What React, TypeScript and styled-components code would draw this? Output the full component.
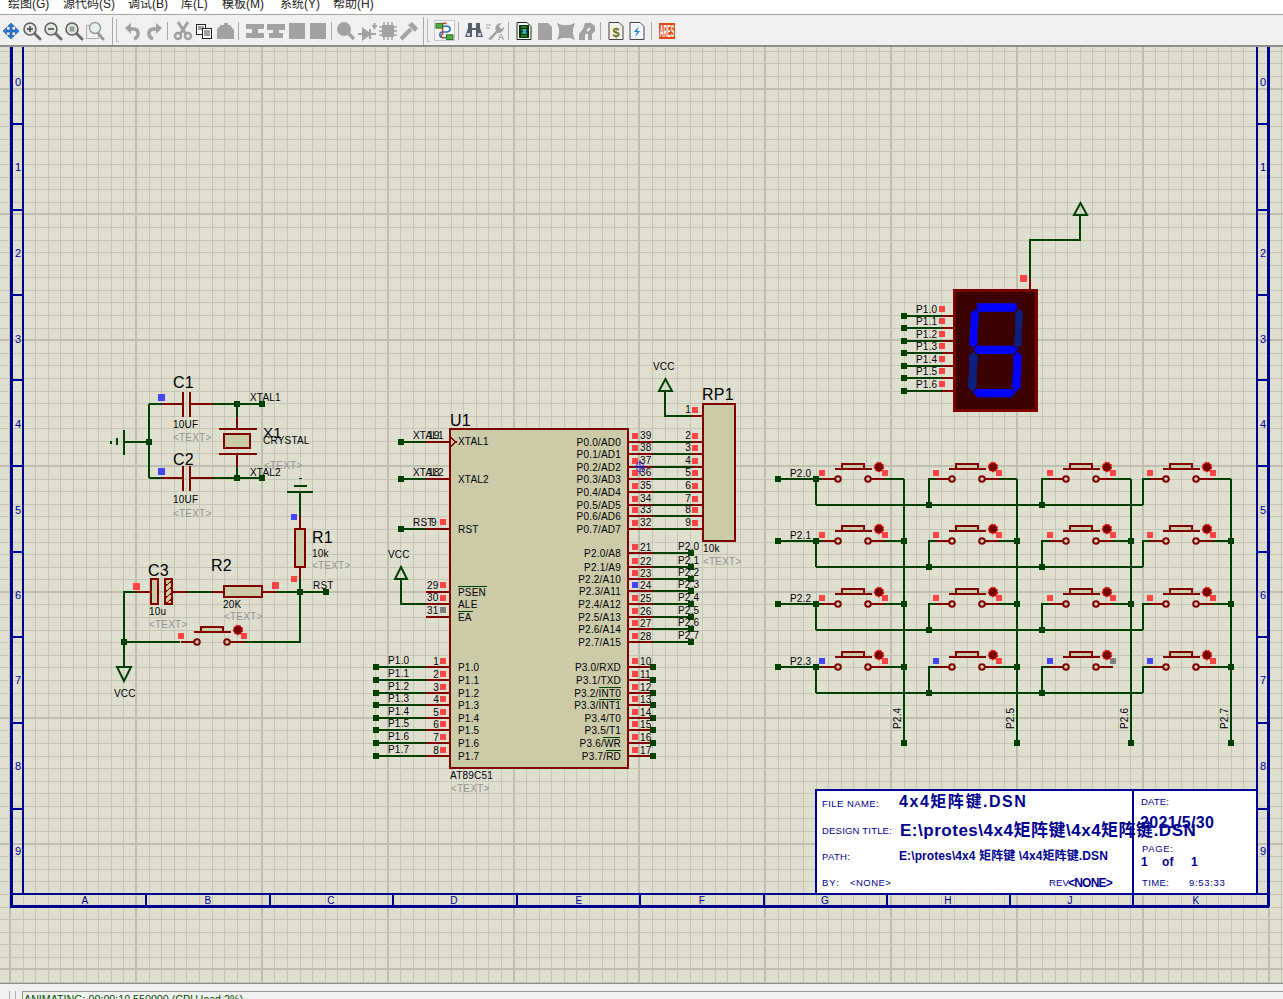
import React from 'react';
import styled, { createGlobalStyle } from 'styled-components';

const WIRE = '#004000';
const LEAD = '#800000';
const SHEET = '#000090';
const BODY = '#cbcbaa';
const GREY = '#a2a2a2';
const FONT = '"Liberation Sans", "Noto Sans CJK SC", sans-serif';

const Global = createGlobalStyle`
  html, body { margin: 0; padding: 0; overflow: hidden; background: #f0f0f0; }
  #root { height: 999px; }
`;

const Shell = styled.div`
  height: 999px;
  width: 1283px;
  display: flex;
  flex-direction: column;
  font-family: ${FONT};
  overflow: hidden;
`;

const MenuBar = styled.nav`
  height: 13px;
  background: #fff;
  display: flex;
  overflow: hidden;
  align-items: flex-end;
  padding-left: 8px;
`;

const MenuItem = styled.span<{ $w: number }>`
  width: ${p => p.$w}px;
  flex: none;
  font-size: 12px;
  line-height: 17px;
  color: #222;
  white-space: nowrap;
`;

const Toolbar = styled.div`
  height: 34px;
  flex: none;
  display: flex;
  align-items: center;
  background: #f0f0f0;
  border-top: 1px solid #f7f7f7;
  border-bottom: 2px solid #8e8e8e;
  box-shadow: inset 0 1px 0 #a9a9a9;
  padding-top: 2px;
  box-sizing: border-box;
`;

const ToolButton = styled.div<{ $active?: boolean }>`
  width: 21px;
  height: 21px;
  flex: none;
  display: flex;
  align-items: center;
  justify-content: center;
  box-sizing: border-box;
  ${p => p.$active && 'border: 1px solid #c8c8c8; background: #f8f8f8;'}
`;

const Sep = styled.div<{ $l: number; $r: number; $tall?: boolean }>`
  width: 1px;
  height: ${p => (p.$tall ? 28 : 18)}px;
  flex: none;
  background: #a8a8a8;
  margin: 0 ${p => p.$r}px 0 ${p => p.$l}px;
`;

const Grip = styled.div<{ $r: number }>`
  width: 2px;
  height: 22px;
  flex: none;
  border-left: 1px solid #b8b8b8;
  border-bottom: 1px solid #b8b8b8;
  margin-right: ${p => p.$r}px;
`;

const Canvas = styled.main`
  flex: 1;
  background: #dfdfd0;
  min-height: 0;
`;

const Sheet = styled.svg`
  display: block;
  font-family: ${FONT};
`;

const StatusBar = styled.footer`
  height: 16px;
  flex: none;
  box-sizing: border-box;
  background: #f0f0f0;
  border-top: 1px solid #8e8e8e;
  overflow: hidden;
  padding-top: 7px;
`;

const StatusRow = styled.div`
  display: flex;
  height: 20px;
  padding-left: 9px;
`;

const StatusGrip = styled.div`
  width: 5px;
  flex: none;
  border-left: 1px solid #b0b0b0;
`;

const StatusPanel = styled.div`
  flex: 1;
  margin-left: 1px;
  border-left: 1px solid #8e8e8e;
  border-top: 1px solid #9a9a9a;
  padding-left: 1px;
  font-size: 10.7px;
  line-height: 14px;
  color: #005000;
  white-space: nowrap;
`;

const GridLine = styled.line<{ $major: boolean }>`
  stroke: ${p => (p.$major ? '#bfbfaf' : '#c6c6b7')};
  stroke-width: ${p => (p.$major ? 2 : 1)};
  shape-rendering: crispEdges;
`;

const WirePath = styled.polyline`
  fill: none;
  stroke: ${WIRE};
  stroke-width: 2;
  shape-rendering: crispEdges;
`;

const LeadPath = styled.polyline<{ $w?: number }>`
  fill: none;
  stroke: ${LEAD};
  stroke-width: ${p => p.$w ?? 2};
  shape-rendering: crispEdges;
`;

const PartBody = styled.rect`
  fill: ${BODY};
  stroke: ${LEAD};
  stroke-width: 2;
  shape-rendering: crispEdges;
`;

const NodeDot = styled.rect`
  fill: ${WIRE};
  shape-rendering: crispEdges;
`;

const Terminal = styled.polygon`
  fill: none;
  stroke: ${WIRE};
  stroke-width: 2;
`;

const MarkRect = styled.rect<{ $tone: string }>`
  fill: ${p => p.$tone};
  shape-rendering: crispEdges;
`;

const Label = styled.text<{ $s?: number; $c?: string; $b?: boolean }>`
  font-size: ${p => p.$s ?? 10}px;
  fill: ${p => p.$c ?? '#000'};
  font-weight: ${p => (p.$b ? 700 : 400)};
  letter-spacing: 0.2px;
`;

const SheetLine = styled.line<{ $w?: number }>`
  stroke: ${SHEET};
  stroke-width: ${p => p.$w ?? 2};
  shape-rendering: crispEdges;
`;

const TitleBox = styled.rect`
  fill: #fff;
  stroke: ${SHEET};
  stroke-width: 2;
  shape-rendering: crispEdges;
`;

const Segment = styled.polygon<{ $on: boolean }>`
  fill: ${p => (p.$on ? '#0000ff' : '#0c2080')};
`;

const DigitCase = styled.rect`
  fill: #3c0000;
  stroke: #7a0000;
  stroke-width: 3;
  shape-rendering: crispEdges;
`;

const Led = styled.circle`
  fill: #700000;
  stroke: #e80000;
  stroke-width: 1.5;
  stroke-dasharray: 2 1;
`;

const PinRing = styled.circle`
  fill: none;
  stroke: ${LEAD};
  stroke-width: 2;
`;

const Probe = styled.g`
  fill: none;
  stroke: #2020d0;
`;

const RED = '#ff4444';
const BLU = '#4444ff';
const GRY = '#808080';

const Wire = ({ p }: { p: string }) => <WirePath points={p} />;
const Lead = ({ p, w }: { p: string; w?: number }) => <LeadPath points={p} $w={w} />;
const Dot = ({ x, y }: { x: number; y: number }) => <NodeDot x={x - 3} y={y - 3} width={6} height={6} />;
const Mark = ({ x, y, t = RED, s = 6 }: { x: number; y: number; t?: string; s?: number }) => (
  <MarkRect x={x - s / 2} y={y - s / 2} width={s} height={s} $tone={t} />
);
const Hidden = ({ x, y }: { x: number; y: number }) => (
  <Label x={x} y={y} $c="#929292">{'<TEXT>'}</Label>
);

// push button with its indicator, x and y are the centre of the left contact
const PushSwitch = ({ x, y, left = RED, right = RED, gap = 30 }: { x: number; y: number; left?: string; right?: string; gap?: number }) => (
  <g>
    <Lead p={`${x - 16},${y} ${x - 3},${y}`} />
    <Lead p={`${x + gap + 3},${y} ${x + gap + 17},${y}`} />
    <PinRing cx={x} cy={y} r={2.8} />
    <PinRing cx={x + gap} cy={y} r={2.8} />
    <Lead p={`${x - 3},${y - 10} ${x + gap + 4},${y - 10}`} />
    <PartBody x={x + 4} y={y - 15} width={gap - 8} height={5} />
    <Led cx={x + gap + 11} cy={y - 12} r={4.4} />
    <Lead p={`${x + gap + 11},${y - 15} ${x + gap + 11},${y - 9}`} w={1} />
    <Mark x={x - 16} y={y - 6} t={left} />
    <Mark x={x + gap + 17} y={y - 6} t={right} />
  </g>
);

const minorX = Array.from({ length: 103 }, (_, i) => i - 11);
const minorY = Array.from({ length: 76 }, (_, i) => i - 4);

const Grid = () => (
  <g>
    {minorX.map(k => {
      const x = Math.round(136 + k * 12.585);
      return <GridLine key={k} x1={x} x2={x} y1={47} y2={983} $major={((k % 10) + 10) % 10 === 0} />;
    })}
    {minorY.map(k => {
      const y = Math.round(88.5 + k * 12.585);
      return <GridLine key={k} x1={0} x2={1283} y1={y} y2={y} $major={((k % 10) + 10) % 10 === 0} />;
    })}
  </g>
);

const ticksY = [124, 210, 295, 380, 466, 552, 637, 723, 809];
const numbersY = [86, 171, 257, 343, 428, 514, 599, 684, 770, 855];
const ticksX = [146, 270, 393, 517, 640, 764, 887, 1010, 1133];
const letters: [string, number][] = [['A', 85], ['B', 208], ['C', 331], ['D', 454], ['E', 579], ['F', 702], ['G', 825], ['H', 948], ['J', 1070], ['K', 1196]];

const Frame = () => (
  <g>
    <SheetLine x1={11} x2={11} y1={47} y2={907} $w={3} />
    <SheetLine x1={23} x2={23} y1={47} y2={895} />
    <SheetLine x1={1257} x2={1257} y1={47} y2={895} />
    <SheetLine x1={1268} x2={1268} y1={47} y2={907} $w={3} />
    <SheetLine x1={11} x2={1268} y1={894} y2={894} />
    <SheetLine x1={10} x2={1269} y1={906} y2={906} $w={3} />
    {ticksY.map(y => (
      <g key={y}>
        <SheetLine x1={11} x2={23} y1={y} y2={y} />
        <SheetLine x1={1257} x2={1268} y1={y} y2={y} />
      </g>
    ))}
    {numbersY.map((y, i) => (
      <g key={y}>
        <Label x={15} y={y} $s={11} $c={SHEET}>{i}</Label>
        <Label x={1260} y={y} $s={11} $c={SHEET}>{i}</Label>
      </g>
    ))}
    {ticksX.map(x => <SheetLine key={x} x1={x} x2={x} y1={894} y2={906} />)}
    {letters.map(([l, x]) => <Label key={l} x={x} y={904} $c={SHEET} textAnchor="middle">{l}</Label>)}
  </g>
);

const TitleBlock = () => (
  <g>
    <TitleBox x={816} y={790} width={441} height={104} />
    <SheetLine x1={1133} x2={1133} y1={790} y2={894} />
    <Label x={822} y={807} $s={9.5} $c={SHEET} textLength={57}>FILE NAME:</Label>
    <Label x={899} y={807} $s={16} $b $c={SHEET} textLength={127}>4x4矩阵键.DSN</Label>
    <Label x={822} y={834} $s={9.5} $c={SHEET} textLength={70}>DESIGN TITLE:</Label>
    <Label x={900} y={836} $s={17} $b $c={SHEET} textLength={296}>E:\protes\4x4矩阵键\4x4矩阵键.DSN</Label>
    <Label x={822} y={860} $s={9.5} $c={SHEET} textLength={28}>PATH:</Label>
    <Label x={899} y={860} $s={12} $b $c={SHEET} textLength={209}>E:\protes\4x4 矩阵键 \4x4矩阵键.DSN</Label>
    <Label x={822} y={886} $s={9.5} $c={SHEET} textLength={17}>BY:</Label>
    <Label x={850} y={886} $s={9.5} $c={SHEET} textLength={41}>{'<NONE>'}</Label>
    <Label x={1049} y={886} $s={9.5} $c={SHEET}>REV</Label>
    <Label x={1068} y={887} $s={12} $b $c={SHEET} textLength={45}>{'<NONE>'}</Label>
    <Label x={1141} y={805} $s={9.5} $c={SHEET} textLength={28}>DATE:</Label>
    <Label x={1140} y={828} $s={16} $b $c={SHEET} textLength={74}>2021/5/30</Label>
    <Label x={1142} y={852} $s={9.5} $c={SHEET} textLength={31}>PAGE:</Label>
    <Label x={1141} y={866} $s={12} $b $c={SHEET}>1</Label>
    <Label x={1162} y={866} $s={12} $b $c={SHEET}>of</Label>
    <Label x={1191} y={866} $s={12} $b $c={SHEET}>1</Label>
    <Label x={1142} y={886} $s={9.5} $c={SHEET} textLength={27}>TIME:</Label>
    <Label x={1189} y={886} $s={9.5} $c={SHEET} textLength={36}>9:53:33</Label>
  </g>
);

const ResetAndClock = () => (
  <g>
    {/* ground and crystal caps */}
    <Wire p="149,404 149,478" />
    <Wire p="149,442 125,442" />
    <NodeDot x={123} y={430} width={2} height={25} />
    <NodeDot x={116} y={438} width={2} height={7} />
    <NodeDot x={110} y={441} width={2} height={3} />
    <Dot x={149} y={442} />
    {[404, 478].map((y, i) => (
      <g key={y}>
        <Wire p={`149,${y} 162,${y}`} />
        <Lead p={`162,${y} 183,${y}`} />
        <Lead p={`183,${y - 12} 183,${y + 13}`} />
        <Lead p={`190,${y - 12} 190,${y + 13}`} />
        <Lead p={`190,${y} 212,${y}`} />
        <Wire p={`212,${y} 262,${y}`} />
        <Dot x={237} y={y} />
        <Dot x={262} y={y} />
        <Mark x={161} y={y - 7} t={BLU} s={7} />
        <Label x={173} y={y - 16 + (i ? 3 : 0)} $s={16}>{`C${i + 1}`}</Label>
        <Label x={173} y={y + 24 + (i ? 1 : 0)}>10UF</Label>
        <Hidden x={173} y={y + 37 + (i ? 2 : 0)} />
      </g>
    ))}
    <Wire p="237,404 237,417" />
    <Lead p="237,417 237,429" />
    <Lead p="219,429 257,429" />
    <PartBody x={224} y={434} width={26} height={14} />
    <Lead p="219,454 257,454" />
    <Lead p="237,454 237,467" />
    <Wire p="237,467 237,478" />
    <Label x={263} y={438} $s={15}>X1</Label>
    <Label x={263} y={444}>CRYSTAL</Label>
    <Hidden x={264} y={469} />
    <Label x={250} y={401}>XTAL1</Label>
    <Label x={250} y={476}>XTAL2</Label>

    {/* reset network */}
    <Wire p="287,492 313,492" />
    <Wire p="294,486 307,486" />
    <NodeDot x={299} y={478} width={3} height={1} />
    <Wire p="300,492 300,516" />
    <Lead p="300,516 300,529" />
    <PartBody x={295} y={529} width={10} height={38} />
    <Lead p="300,567 300,579" />
    <Wire p="300,579 300,642 244,642" />
    <Wire p="300,592 326,592" />
    <Dot x={300} y={592} />
    <Dot x={326} y={592} />
    <Mark x={294} y={517} t={BLU} />
    <Mark x={294} y={579} />
    <Label x={312} y={543} $s={16}>R1</Label>
    <Label x={312} y={557}>10k</Label>
    <Hidden x={312} y={569} />
    <Label x={313} y={589}>RST</Label>

    <Wire p="124,667 124,592 136,592" />
    <Lead p="136,592 151,592" />
    <PartBody x={151} y={579} width={7} height={25} />
    <PartBody x={165} y={579} width={7} height={25} />
    <Lead p="165,586 172,581" w={1} />
    <Lead p="165,592 172,587" w={1} />
    <Lead p="165,598 172,593" w={1} />
    <Lead p="165,604 172,599" w={1} />
    <Lead p="172,592 187,592" />
    <Wire p="187,592 212,592" />
    <Lead p="212,592 224,592" />
    <PartBody x={224} y={586} width={38} height={11} />
    <Lead p="262,592 276,592" />
    <Wire p="276,592 300,592" />
    <Mark x={136} y={586} s={7} />
    <Mark x={275} y={585} s={7} />
    <Label x={148} y={576} $s={16}>C3</Label>
    <Label x={149} y={615}>10u</Label>
    <Hidden x={149} y={628} />
    <Label x={211} y={571} $s={16}>R2</Label>
    <Label x={223} y={608}>20K</Label>
    <Hidden x={224} y={620} />

    <Wire p="124,642 180,642" />
    <Dot x={124} y={642} />
    <PushSwitch x={197} y={642} />
    <Terminal points="117,667 131,667 124,681" />
    <Label x={114} y={697}>VCC</Label>
  </g>
);

const p0Rows: [number, number, string, number][] = [
  [39, 442, 'P0.0/AD0', 2], [38, 454, 'P0.1/AD1', 3], [37, 467, 'P0.2/AD2', 4], [36, 479, 'P0.3/AD3', 5],
  [35, 492, 'P0.4/AD4', 6], [34, 505, 'P0.5/AD5', 7], [33, 516, 'P0.6/AD6', 8], [32, 529, 'P0.7/AD7', 9],
];
const p2Rows: [number, number, string, string][] = [
  [21, 553, 'P2.0/A8', 'P2.0'], [22, 567, 'P2.1/A9', 'P2.1'], [23, 579, 'P2.2/A10', 'P2.2'], [24, 591, 'P2.3/A11', 'P2.3'],
  [25, 604, 'P2.4/A12', 'P2.4'], [26, 617, 'P2.5/A13', 'P2.5'], [27, 629, 'P2.6/A14', 'P2.6'], [28, 642, 'P2.7/A15', 'P2.7'],
];
const sideY = [667, 680, 693, 705, 718, 730, 743, 756];
const p3Names = ['P3.0/RXD', 'P3.1/TXD', 'P3.2/INT0', 'P3.3/INT1', 'P3.4/T0', 'P3.5/T1', 'P3.6/WR', 'P3.7/RD'];
const bars: [number, number, number][] = [[599, 621, 687], [599, 621, 699], [603, 620, 737], [606, 621, 750]];

const Controller = () => (
  <g>
    {/* leads under the package so the border stays on top */}
    {[442, 479, 529].map(y => (
      <g key={y}>
        <Wire p={`401,${y} 426,${y}`} />
        <Lead p={`426,${y} 450,${y}`} />
        <Dot x={401} y={y} />
      </g>
    ))}
    {[592, 604, 617].map(y => <Lead key={y} p={`426,${y} 450,${y}`} />)}
    <PartBody x={450} y={429} width={178} height={339} />
    <Lead p="451,438 456,442 451,446" w={1.5} />
    <Label x={450} y={426} $s={16}>U1</Label>
    <Label x={450} y={779}>AT89C51</Label>
    <Hidden x={451} y={792} />

    <Label x={413} y={439}>XTAL1</Label>
    <Label x={428} y={439}>19</Label>
    <Label x={413} y={476}>XTAL2</Label>
    <Label x={428} y={476}>18</Label>
    <Label x={413} y={526}>RST</Label>
    <Label x={431} y={526}>9</Label>
    <Mark x={443} y={522} />
    <Label x={458} y={445}>XTAL1</Label>
    <Label x={458} y={483}>XTAL2</Label>
    <Label x={458} y={533}>RST</Label>

    <Wire p="401,579 401,604 426,604" />
    <Terminal points="401,567 395,579 407,579" />
    <Label x={388} y={558}>VCC</Label>
    <Label x={427} y={589}>29</Label>
    <Label x={427} y={601}>30</Label>
    <Label x={427} y={614}>31</Label>
    <Mark x={443} y={585} />
    <Mark x={443} y={598} />
    <Mark x={443} y={610} t={GRY} />
    <Label x={458} y={596}>PSEN</Label>
    <NodeDot x={458} y={586} width={29} height={1} />
    <Label x={458} y={608}>ALE</Label>
    <Label x={458} y={621}>EA</Label>
    <NodeDot x={458} y={611} width={15} height={1} />

    {sideY.map((y, i) => (
      <g key={y}>
        <Wire p={`376,${y} 426,${y}`} />
        <Lead p={`426,${y} 450,${y}`} />
        <Dot x={376} y={y} />
        <Label x={388} y={y - 3}>{`P1.${i}`}</Label>
        <Label x={439} y={y - 2} textAnchor="end">{i + 1}</Label>
        <Mark x={443} y={y - 6} />
        <Label x={458} y={y + 4}>{`P1.${i}`}</Label>
        <Lead p={`628,${y} 653,${y}`} />
        <Dot x={653} y={y} />
        <Label x={640} y={y - 2}>{i + 10}</Label>
        <Mark x={635} y={y - 6} />
        <Label x={621} y={y + 4} textAnchor="end">{p3Names[i]}</Label>
      </g>
    ))}
    {bars.map(([a, b, y]) => <NodeDot key={y} x={a} y={y} width={b - a} height={1} />)}

    {p0Rows.map(([n, y, name, m]) => (
      <g key={n}>
        <Lead p={`628,${y} 653,${y}`} />
        <Wire p={`653,${y} 691,${y}`} />
        <Lead p={`691,${y} 703,${y}`} />
        <Mark x={635} y={y - 6} />
        <Label x={640} y={y - 3}>{n}</Label>
        <Label x={621} y={y + 4} textAnchor="end">{name}</Label>
        <Label x={691} y={y - 3} textAnchor="end">{m}</Label>
        <Mark x={695} y={y - 6} />
      </g>
    ))}
    {p2Rows.map(([n, y, name, net]) => (
      <g key={n}>
        <Lead p={`628,${y} 653,${y}`} />
        <Wire p={`653,${y} 691,${y}`} />
        <Dot x={691} y={y} />
        <Mark x={635} y={y - 6} t={n === 24 ? BLU : RED} />
        <Label x={640} y={y - 2}>{n}</Label>
        <Label x={621} y={y + 4} textAnchor="end">{name}</Label>
        <Label x={678} y={y - 3}>{net}</Label>
      </g>
    ))}

    {/* pull up pack */}
    <Terminal points="665.5,379 659,391 672,391" />
    <Wire p="665,391 665,416 691,416" />
    <Lead p="691,416 703,416" />
    <Label x={653} y={370}>VCC</Label>
    <Label x={691} y={413} textAnchor="end">1</Label>
    <Mark x={695} y={410} />
    <PartBody x={703} y={404} width={32} height={137} />
    <Label x={702} y={400} $s={16}>RP1</Label>
    <Label x={703} y={552}>10k</Label>
    <Hidden x={703} y={565} />
    {/* probe cursor */}
    <Probe>
      <ellipse cx={640} cy={467} rx={3.5} ry={5} />
      <line x1={640} x2={640} y1={460} y2={474} />
      <line x1={634} x2={646} y1={467} y2={467} />
    </Probe>
  </g>
);

const segY = [316, 328, 341, 353, 366, 378, 391];
// outlines read off the digit, mapped below from a 3x crop at (890, 190)
const segments: [string, boolean][] = [
  ['262,340 378,340 382,352 375,365 265,365 260,352', true],
  ['258,358 267,368 263,420 262,465 250,472 238,465 243,368', true],
  ['388,358 399,368 395,418 395,465 383,472 372,465 376,418 376,368', false],
  ['250,478 262,467 372,467 384,478 372,492 262,492', true],
  ['250,485 264,497 260,545 260,592 248,605 233,592 237,545 237,497', false],
  ['383,485 395,497 392,570 392,592 378,605 365,592 370,540 370,497', true],
  ['248,605 262,597 365,597 378,605 365,622 262,622', true],
];
const toScreen = (pts: string) =>
  pts.split(' ').map(p => {
    const [x, y] = p.split(',').map(Number);
    return `${890 + x / 3},${190 + y / 3}`;
  }).join(' ');

const Display = () => (
  <g>
    {segY.map((y, i) => (
      <g key={y}>
        <Wire p={`904,${y} 942,${y}`} />
        <Lead p={`942,${y} 954,${y}`} />
        <Dot x={904} y={y} />
        <Label x={916} y={y - 3}>{`P1.${i}`}</Label>
        <Mark x={942} y={y - 7} />
      </g>
    ))}
    <Lead p="1030,278 1030,290" />
    <Wire p="1030,278 1030,240 1080,240 1080,215" />
    <Terminal points="1080.5,203 1074,215 1087,215" />
    <Mark x={1023} y={278} s={7} />
    <DigitCase x={954} y={290} width={82} height={120} />
    {segments.map(([pts, on], i) => <Segment key={i} points={toScreen(pts)} $on={on} />)}
  </g>
);

const columns = [
  { c: 838, bus: 816, drop: 904, net: 'P2.4', nx: 901 },
  { c: 952, bus: 929, drop: 1017, net: 'P2.5', nx: 1014 },
  { c: 1066, bus: 1042, drop: 1131, net: 'P2.6', nx: 1128 },
  { c: 1166, bus: 1143, drop: 1231, net: 'P2.7', nx: 1228 },
];
const rowsY = [479, 541, 604, 667];

const Matrix = () => (
  <g>
    {columns.map(col => (
      <g key={col.c}>
        <Wire p={`${col.drop},479 ${col.drop},743`} />
        <Dot x={col.drop} y={743} />
        <Label transform={`translate(${col.nx} 729) rotate(-90)`}>{col.net}</Label>
      </g>
    ))}
    {rowsY.map((y, r) => (
      <g key={y}>
        <Wire p={`778,${y} 816,${y}`} />
        <Dot x={778} y={y} />
        <Dot x={816} y={y} />
        <Label x={790} y={y - 2}>{`P2.${r}`}</Label>
        <Wire p={`816,${y + 26} 1143,${y + 26}`} />
        {columns.map((col, i) => {
          const open = r === 3 && i === 2;
          return (
            <g key={col.c}>
              <Wire p={`${col.bus},${y + 26} ${col.bus},${y} ${col.c - 16},${y}`} />
              {!open && <Wire p={`${col.c + 47},${y} ${col.drop},${y}`} />}
              {r > 0 && !open && <Dot x={col.drop} y={y} />}
              {i > 0 && i < 3 && <Dot x={col.bus} y={y + 26} />}
              <PushSwitch x={col.c} y={y} left={r === 3 ? BLU : RED} right={open ? GRY : RED} />
            </g>
          );
        })}
      </g>
    ))}
  </g>
);

/* toolbar glyphs */
const Glyph = styled.svg`
  display: block;
  width: 20px;
  height: 20px;
  font-family: ${FONT};
`;

const Lens = ({ mark }: { mark?: 'plus' | 'minus' | 'fit' }) => (
  <Glyph viewBox="0 0 20 20">
    <path d="M12 12l6 6" stroke="#6f6f6f" strokeWidth={3} strokeLinecap="round" />
    <circle cx={8} cy={8} r={6} fill="#dfe6df" stroke="#5c5c5c" strokeWidth={1.5} />
    {mark === 'plus' && <path d="M5 8h6M8 5v6" stroke="#444" strokeWidth={1.5} />}
    {mark === 'minus' && <path d="M5 8h6" stroke="#444" strokeWidth={1.5} />}
    {mark === 'fit' && <rect x={5.5} y={5.5} width={5} height={5} fill="#9aa09a" />}
  </Glyph>
);

const icons: Record<string, React.ReactNode> = {
  move: (
    <Glyph viewBox="0 0 20 20">
      <path d="M10 2l3.5 3.5h-2.5v3.5h3.5V6.5L18 10l-3.5 3.5V11H11v3.5h2.5L10 18l-3.5-3.5H9V11H5.5v2.5L2 10l3.5-3.5V9H9V5.5H6.5z" fill="#2a7fdc" stroke="#12408a" strokeWidth={0.6} />
    </Glyph>
  ),
  zoomIn: <Lens mark="plus" />,
  zoomOut: <Lens mark="minus" />,
  zoomFit: <Lens mark="fit" />,
  zoomArea: (
    <Glyph viewBox="0 0 20 20">
      <rect x={1.5} y={4.5} width={12} height={13} fill="none" stroke="#666" strokeDasharray="1 1" />
      <path d="M13 12l5 6" stroke="#9a9a9a" strokeWidth={3} strokeLinecap="round" />
      <circle cx={10} cy={7} r={5.5} fill="#e8eeee" stroke="#9a9a9a" strokeWidth={1.5} />
    </Glyph>
  ),
  undo: (
    <Glyph viewBox="0 0 20 20">
      <path d="M11 18c5-2 6-9 0-10H6" fill="none" stroke={GREY} strokeWidth={3.5} />
      <path d="M2 7l6-5v11z" fill={GREY} />
    </Glyph>
  ),
  redo: (
    <Glyph viewBox="0 0 20 20">
      <path d="M9 18c-5-2-6-9 0-10h5" fill="none" stroke={GREY} strokeWidth={3.5} />
      <path d="M18 7l-6-5v11z" fill={GREY} />
    </Glyph>
  ),
  cut: (
    <Glyph viewBox="0 0 20 20">
      <path d="M5 1l8 12M15 1L7 13" stroke={GREY} strokeWidth={3} />
      <circle cx={5} cy={15} r={3} fill="none" stroke={GREY} strokeWidth={2.5} />
      <circle cx={15} cy={15} r={3} fill="none" stroke={GREY} strokeWidth={2.5} />
    </Glyph>
  ),
  copy: (
    <Glyph viewBox="0 0 20 20">
      <rect x={2.5} y={3.5} width={9} height={10} fill="#fff" stroke="#222" />
      <rect x={8.5} y={7.5} width={9} height={10} fill="#fff" stroke="#222" />
      <path d="M4 6h6M4 8h4M10 10h6M10 12h6M10 14h6" stroke="#444" />
    </Glyph>
  ),
  paste: (
    <Glyph viewBox="0 0 20 20">
      <path d="M2 8l4-4h3V2h4v2h2l4 5v9H2z" fill={GREY} />
    </Glyph>
  ),
  blockCopy: (
    <Glyph viewBox="0 0 20 20">
      <path d="M1 3h18v5h-6v4h6v5H1v-5h6V8H1z" fill={GREY} />
    </Glyph>
  ),
  blockMove: (
    <Glyph viewBox="0 0 20 20">
      <path d="M1 3h18v6h-6v3h4v5H3v-5h4V9H1z" fill={GREY} />
    </Glyph>
  ),
  solid: (
    <Glyph viewBox="0 0 20 20">
      <rect x={2} y={2} width={16} height={16} fill={GREY} />
    </Glyph>
  ),
  pick: (
    <Glyph viewBox="0 0 20 20">
      <circle cx={8} cy={8} r={7} fill={GREY} />
      <path d="M12 12l6 6" stroke={GREY} strokeWidth={3.5} />
    </Glyph>
  ),
  device: (
    <Glyph viewBox="0 0 20 20">
      <path d="M1 13h5M6 8l7 5-7 5zM13 8v10M13 13h6M15 5h5M17.5 2v6" stroke={GREY} strokeWidth={2} fill={GREY} />
    </Glyph>
  ),
  chip: (
    <Glyph viewBox="0 0 20 20">
      <path d="M4 4h12v12H4z" fill={GREY} />
      <path d="M1 6h3M1 10h3M1 14h3M16 6h3M16 10h3M16 14h3M6 1v3M10 1v3M14 1v3M6 16v3M10 16v3M14 16v3" stroke={GREY} strokeWidth={1.5} />
    </Glyph>
  ),
  hammer: (
    <Glyph viewBox="0 0 20 20">
      <path d="M2 18l10-10" stroke={GREY} strokeWidth={4} />
      <path d="M9 4l4-3 6 6-3 4z" fill={GREY} />
    </Glyph>
  ),
  netlist: (
    <Glyph viewBox="0 0 20 20">
      <path d="M6 5h7a2 2 0 0 1 0 6H8a2 2 0 0 0 0 6h6" fill="none" stroke="#2070c8" strokeWidth={1.5} />
      <path d="M12 3a2 2 0 0 0-4 2v8a2 2 0 0 0 2 4" fill="none" stroke="#d04020" strokeWidth={1.5} />
      <rect x={1} y={2} width={7} height={5} fill="#4cae3c" stroke="#2c6a24" />
      <rect x={12} y={14} width={7} height={5} fill="#4cae3c" stroke="#2c6a24" />
    </Glyph>
  ),
  binoculars: (
    <Glyph viewBox="0 0 20 20">
      <path d="M4 2h4v5h4V2h4v5l3 9h-7V9H8v7H1l3-9z" fill="#55606a" />
      <path d="M3 12h3v3H3zM14 12h3v3h-3z" fill="#c8d0d8" />
    </Glyph>
  ),
  wrench: (
    <Glyph viewBox="0 0 20 20">
      <path d="M1 4h5M1 7h4" stroke={GREY} />
      <path d="M3 18l8-8c-2-4 1-8 6-8l-3 3 2 3 3-2c0 4-4 7-7 6l-6 7z" fill={GREY} />
      <text x={13} y={19} fontSize={9} fill="#808080">A</text>
    </Glyph>
  ),
  bom: (
    <Glyph viewBox="0 0 20 20">
      <path d="M3 1.5h10l4 4v13H3z" fill="#fff" stroke="#222" />
      <rect x={5} y={4} width={10} height={13} fill="#0a300a" />
      <path d="M7 6h6M7 9h6M7 12h6M7 15h6" stroke="#38c838" />
      <rect x={9} y={8} width={3} height={5} fill="#30b0e0" />
    </Glyph>
  ),
  sheet: (
    <Glyph viewBox="0 0 20 20">
      <path d="M3 2h10l4 4v13H3z" fill={GREY} />
    </Glyph>
  ),
  cross: (
    <Glyph viewBox="0 0 20 20">
      <path d="M1 2l5 2h8l5-2-2 6v5l2 6-5-2H6l-5 2 2-6V8z" fill={GREY} />
    </Glyph>
  ),
  hands: (
    <Glyph viewBox="0 0 20 20">
      <path d="M8 2h6l4 3v5l-3 3v6h-4v-6H8v6H2v-6l4-5z" fill={GREY} />
      <path d="M10 10l3-3" stroke="#f0f0f0" strokeWidth={2} />
    </Glyph>
  ),
  dollar: (
    <Glyph viewBox="0 0 20 20">
      <path d="M3 1.5h10l4 4v13H3z" fill="#f4f4ea" stroke="#444" />
      <text x={10} y={16} fontSize={13} textAnchor="middle" fontWeight={700} fill="#707020">$</text>
    </Glyph>
  ),
  bolt: (
    <Glyph viewBox="0 0 20 20">
      <path d="M3 1.5h10l4 4v13H3z" fill="#f4f8fc" stroke="#444" />
      <path d="M12 5l-5 6h3l-2 5 5-6h-3z" fill="#1080e0" />
    </Glyph>
  ),
  ares: (
    <Glyph viewBox="0 0 20 20">
      <rect x={2} y={2} width={16} height={16} fill="#e04a18" />
      <text transform="scale(0.65 2)" x={15.4} y={7.8} fontSize={8} textAnchor="middle" fontWeight={700} fill="#fff">ARES</text>
    </Glyph>
  ),
};

const Tool = ({ name, active }: { name: string; active?: boolean }) => (
  <ToolButton $active={active}>{icons[name]}</ToolButton>
);

const menus: [string, number][] = [['绘图(G)', 55], ['源代码(S)', 65], ['调试(B)', 53], ['库(L)', 41], ['模板(M)', 58], ['系统(Y)', 53], ['帮助(H)', 60]];

export default function App() {
  return (
    <Shell>
      <Global />
      <MenuBar>
        {menus.map(([m, w]) => <MenuItem key={m} $w={w}>{m}</MenuItem>)}
      </MenuBar>
      <Toolbar>
        <Tool name="move" />
        <Tool name="zoomIn" />
        <Tool name="zoomOut" />
        <Tool name="zoomFit" />
        <Tool name="zoomArea" />
        <Sep $l={7} $r={3} $tall />
        <Grip $r={3} />
        <Tool name="undo" />
        <Tool name="redo" />
        <Sep $l={3} $r={4} />
        <Tool name="cut" />
        <Tool name="copy" />
        <Tool name="paste" />
        <Sep $l={3} $r={5} />
        <Tool name="blockCopy" />
        <Tool name="blockMove" />
        <Tool name="solid" />
        <Tool name="solid" />
        <Sep $l={3} $r={3} />
        <Tool name="pick" />
        <Tool name="device" />
        <Tool name="chip" />
        <Tool name="hammer" />
        <Sep $l={4} $r={3} $tall />
        <Grip $r={4} />
        <Tool name="netlist" active />
        <Sep $l={3} $r={4} />
        <Tool name="binoculars" />
        <Tool name="wrench" />
        <Sep $l={3} $r={4} />
        <Tool name="bom" />
        <Tool name="sheet" />
        <Tool name="cross" />
        <Tool name="hands" />
        <Sep $l={3} $r={4} />
        <Tool name="dollar" />
        <Tool name="bolt" />
        <Sep $l={4} $r={4} />
        <Tool name="ares" />
      </Toolbar>
      <Canvas>
        <Sheet width={1283} height={936} viewBox="0 47 1283 936">
          <Grid />
          <Frame />
          <TitleBlock />
          <ResetAndClock />
          <Controller />
          <Display />
          <Matrix />
        </Sheet>
      </Canvas>
      <StatusBar>
        <StatusRow>
          <StatusGrip />
          <StatusGrip />
          <StatusPanel>ANIMATING: 00:00:10.550000 (CPU load 2%)</StatusPanel>
        </StatusRow>
      </StatusBar>
    </Shell>
  );
}
